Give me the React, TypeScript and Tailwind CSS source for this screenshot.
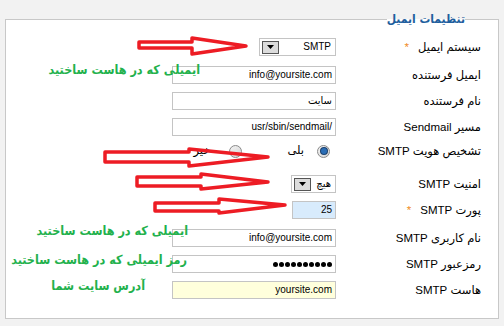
import React from 'react';

// red hand-drawn arrows, centre lines of the outline
const arrows = [
  '139,42 192,42 192,38 246,46 192,54 192,48 139,48',
  '105,152 189,152 189,149 268,157 189,166 189,162 105,162',
  '137,177 201,177 201,174 268,182 201,189 201,186 137,186',
  '155,203 219,203 219,199 285,205 219,213 219,211 155,211',
];

const notes = [
  { text: 'ایمیلی که در هاست ساختید', className: 'right-[304px] top-[60px]' },
  { text: 'ایمیلی که در هاست ساختید', className: 'right-[316px] top-[221px]' },
  { text: 'رمز ایمیلی که در هاست ساختید', className: 'right-[317px] top-[250px]' },
  { text: 'آدرس سایت شما', className: 'right-[359px] top-[276px]' },
];

function Row({
  label,
  required,
  className,
  children,
}: {
  label: string;
  required?: boolean;
  className: string;
  children: React.ReactNode;
}) {
  return (
    <div className={`flex items-center h-[18px] ${className}`}>
      <div className="w-[145px] shrink-0 text-[11.5px] leading-[18px] text-black whitespace-nowrap">
        {label}
        {required && <span className="text-[#f08a24] mr-[9px]">*</span>}
      </div>
      {children}
    </div>
  );
}

function Box({ value, className = 'w-[164px] bg-white' }: { value: React.ReactNode; className?: string }) {
  return (
    <div className={`flex items-center h-[18px] border border-[#c4c4c4] px-[3px] text-[10px] leading-[16px] text-black ${className}`}>
      {value}
    </div>
  );
}

function Select({ value, className }: { value: string; className: string }) {
  return (
    <div className={`flex items-center justify-between h-[18px] border border-[#c4c4c4] bg-white pr-[4px] pl-[2px] ${className}`}>
      <span className="text-[10px] leading-[16px] text-black">{value}</span>
      <span className="flex items-center justify-center w-[17px] h-[13px] border border-[#555] bg-[#dcdcdc]">
        <svg width="7" height="4" viewBox="0 0 7 4">
          <path d="M0 0 H7 L3.5 4 Z" fill="#000" />
        </svg>
      </span>
    </div>
  );
}

function Radio({ checked }: { checked?: boolean }) {
  return (
    <span className="flex items-center justify-center w-[13px] h-[13px] rounded-full border border-[#8a8a8a] bg-gradient-to-br from-[#f4f4f4] to-[#d4d4d4]">
      {checked && <span className="w-[6px] h-[6px] rounded-full bg-[#2a6db5] ring-1 ring-[#1b3f6b]" />}
    </span>
  );
}

function Dots() {
  return (
    <span className="flex gap-[1px]">
      {Array.from({ length: 10 }).map((_, i) => (
        <span key={i} className="w-[5px] h-[5px] rounded-full bg-black" />
      ))}
    </span>
  );
}

export default function App() {
  return (
    <div className="relative w-[504px] h-[326px] overflow-hidden bg-[#f2f2f2] pt-[11px] pl-[5px] font-[family-name:'Liberation_Sans','DejaVu_Sans',sans-serif]">
      <fieldset dir="rtl" className="w-[494px] h-[308px] border border-[#c8c8c8] bg-white pr-[17px]">
        <legend className="mr-[16px] text-[12px] leading-[16px] font-bold text-[#1f5f9e] font-[family-name:'DejaVu_Sans_Condensed','DejaVu_Sans',sans-serif]">
          تنظیمات ایمیل
        </legend>

        <Row label="سیستم ایمیل" required className="mt-[11px]">
          <Select value="SMTP" className="w-[77px]" />
        </Row>
        <Row label="ایمیل فرستنده" className="mt-[10px]">
          <Box value="info@yoursite.com" />
        </Row>
        <Row label="نام فرستنده" className="mt-[8px]">
          <Box value="سایت" />
        </Row>
        <Row label="مسیر Sendmail" className="mt-[8px]">
          <Box value="/usr/sbin/sendmail" />
        </Row>
        <Row label="تشخیص هویت SMTP" className="mt-[6px]">
          <div className="flex items-center text-[11.5px] text-black">
            <span className="mr-[6px]">
              <Radio checked />
            </span>
            <span className="mr-[13px]">بلی</span>
            <span className="mr-[45px]">
              <Radio />
            </span>
            <span className="mr-[19px]">خیر</span>
          </div>
        </Row>
        <Row label="امنیت SMTP" className="mt-[15px]">
          <Select value="هیچ" className="w-[45px]" />
        </Row>
        <Row label="پورت SMTP" required className="mt-[8px]">
          <Box value="25" className="w-[44px] bg-[#d8ebfc]" />
        </Row>
        <Row label="نام کاربری SMTP" className="mt-[10px]">
          <Box value="info@yoursite.com" />
        </Row>
        <Row label="رمزعبور SMTP" className="mt-[8px]">
          <Box value={<Dots />} />
        </Row>
        <Row label="هاست SMTP" className="mt-[8px]">
          <Box value="yoursite.com" className="w-[164px] bg-[#ffffdc]" />
        </Row>
      </fieldset>

      <svg className="absolute inset-0 pointer-events-none" width="504" height="326" viewBox="0 0 504 326">
        {arrows.map((p, i) => (
          <polygon key={i} points={p} fill="none" stroke="#ed1c24" strokeWidth="3.5" strokeLinejoin="round" />
        ))}
      </svg>

      {notes.map((n, i) => (
        <div
          key={i}
          dir="rtl"
          className={`absolute whitespace-nowrap text-[12.5px] leading-[20px] font-bold text-[#22b14c] font-[family-name:'DejaVu_Sans_Condensed','DejaVu_Sans',sans-serif] ${n.className}`}
        >
          {n.text}
        </div>
      ))}
    </div>
  );
}
